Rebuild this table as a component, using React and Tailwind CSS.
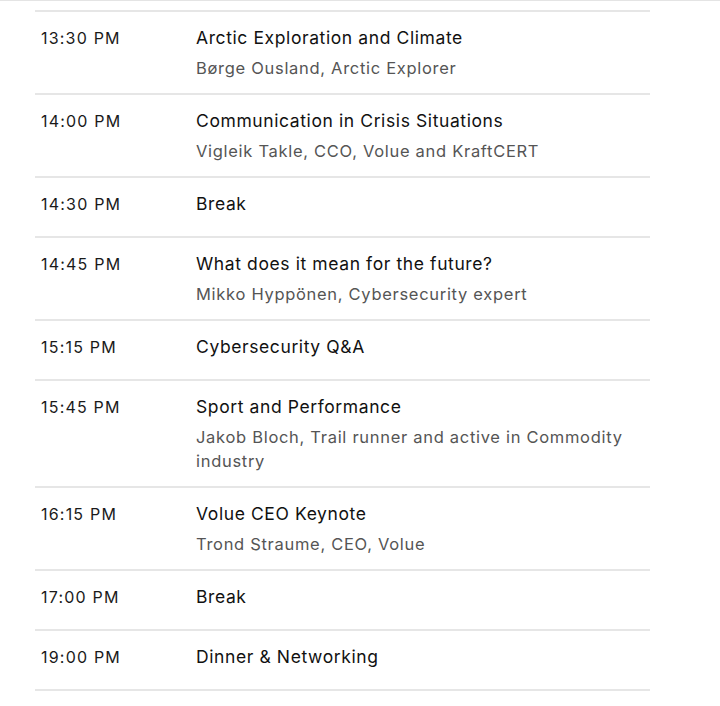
import React from "react";

const rows = [
  { time: "13:30 PM", title: "Arctic Exploration and Climate", sub: "Børge Ousland, Arctic Explorer" },
  { time: "14:00 PM", title: "Communication in Crisis Situations", sub: "Vigleik Takle, CCO, Volue and KraftCERT" },
  { time: "14:30 PM", title: "Break" },
  { time: "14:45 PM", title: "What does it mean for the future?", sub: "Mikko Hyppönen, Cybersecurity expert" },
  { time: "15:15 PM", title: "Cybersecurity Q&A" },
  { time: "15:45 PM", title: "Sport and Performance", sub: "Jakob Bloch, Trail runner and active in Commodity industry" },
  { time: "16:15 PM", title: "Volue CEO Keynote", sub: "Trond Straume, CEO, Volue" },
  { time: "17:00 PM", title: "Break" },
  { time: "19:00 PM", title: "Dinner & Networking" },
];

export default function App() {
  return (
    <div className="w-[720px] h-[706px] bg-white overflow-hidden" style={{ fontFamily: 'Inter, "Liberation Sans", sans-serif' }}>
      <div className="h-px bg-[#e4e4e4]" />
      <div className="ml-[35px] w-[615px] mt-[9px] border-t-2 border-[#e6e6e6]">
        {rows.map((r, i) => (
          <div key={i} className="flex items-baseline border-b-2 border-[#e6e6e6] pt-[15px] pb-[13px]">
            <div className="w-[161px] pl-[6px] text-[16px] leading-[22px] tracking-[1.2px] text-[#1a1a1a] shrink-0">{r.time}</div>
            <div className="flex-1 pr-[24px] min-h-[30px]">
              <div className="text-[17.5px] leading-[22px] tracking-[0.6px] text-[#111]">{r.title}</div>
              {r.sub && (
                <div className="text-[16.5px] leading-[24px] tracking-[0.7px] text-[#555] mt-[7px]">{r.sub}</div>
              )}
            </div>
          </div>
        ))}
      </div>
    </div>
  );
}
